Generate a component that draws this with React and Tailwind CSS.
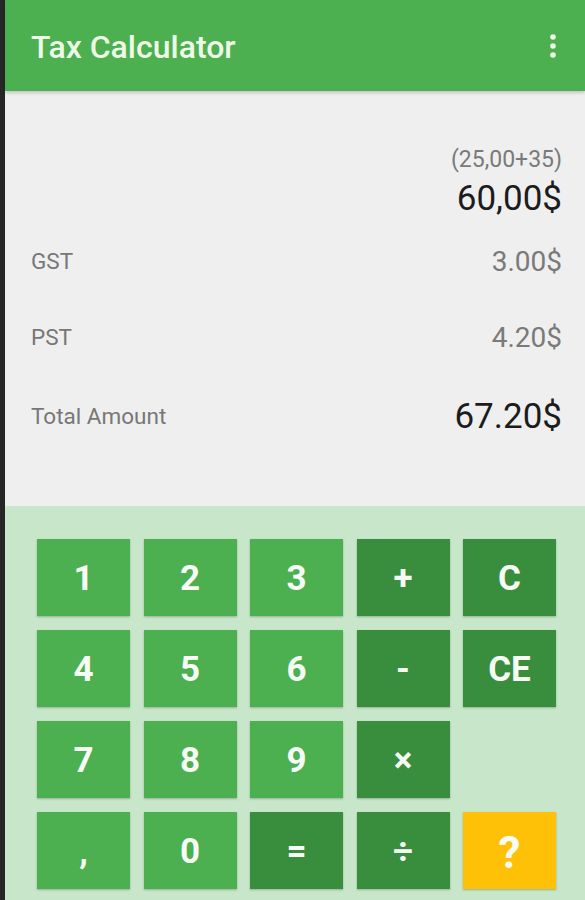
import React from "react";

const keys = [
  { t: "1", c: "l" }, { t: "2", c: "l" }, { t: "3", c: "l" }, { t: "+", c: "d" }, { t: "C", c: "d" },
  { t: "4", c: "l" }, { t: "5", c: "l" }, { t: "6", c: "l" }, { t: "-", c: "d" }, { t: "CE", c: "d" },
  { t: "7", c: "l" }, { t: "8", c: "l" }, { t: "9", c: "l" }, { t: "×", c: "d" }, { t: "", c: "n" },
  { t: ",", c: "l" }, { t: "0", c: "l" }, { t: "=", c: "d" }, { t: "÷", c: "d" }, { t: "?", c: "y" },
];

function Key({ k }) {
  if (k.c === "n") return <div />;
  const bg =
    k.c === "l" ? "bg-[#4caf50]" : k.c === "d" ? "bg-[#388e3c]" : "bg-[#ffc107]";
  const size = k.c === "y" ? "text-[44px]" : "text-[35px]";
  return (
    <div
      className={`${bg} flex items-center justify-center pt-[4px] text-[#f7fbf5] font-bold ${size} shadow-[0_1px_2px_rgba(0,0,0,0.25)]`}
    >
      {k.t}
    </div>
  );
}

export default function App() {
  return (
    <div
      className="flex w-[585px] h-[900px] overflow-hidden"
      style={{ fontFamily: "Roboto, 'Noto Sans', sans-serif" }}
    >
      <div className="w-[5px] bg-[#262626] shrink-0" />
      <div className="flex flex-col flex-1">
        <div className="h-[91px] bg-[#4caf50] flex items-center justify-between pl-[26px] pr-[28px] shadow-[0_2px_3px_rgba(0,0,0,0.18)] relative z-10">
          <div className="text-[32px] font-medium text-[#eef8e6] leading-none pt-[2px]">Tax Calculator</div>
          <svg width="8" height="26" viewBox="0 0 8 26">
            <circle cx="4" cy="4" r="2.8" fill="#eef8e6" />
            <circle cx="4" cy="13" r="2.8" fill="#eef8e6" />
            <circle cx="4" cy="22" r="2.8" fill="#eef8e6" />
          </svg>
        </div>
        <div className="h-[415px] bg-[#efefef] flex flex-col pt-[55px] pl-[26px] pr-[23px]">
          <div className="h-[28px] leading-[28px] text-right text-[23px] text-[#7a7a7a]">(25,00+35)</div>
          <div className="mt-[5px] h-[40px] leading-[40px] text-right text-[35px] text-[#1c1c1c]">60,00$</div>
          <div className="mt-[23px] h-[40px] flex items-center justify-between">
            <span className="text-[22.5px] text-[#777777]">GST</span>
            <span className="text-[28px] text-[#7a7a7a]">3.00$</span>
          </div>
          <div className="mt-[36px] h-[40px] flex items-center justify-between">
            <span className="text-[22.5px] text-[#777777]">PST</span>
            <span className="text-[28px] text-[#7a7a7a]">4.20$</span>
          </div>
          <div className="mt-[39px] h-[40px] flex items-center justify-between">
            <span className="text-[22.5px] text-[#777777]">Total Amount</span>
            <span className="text-[35px] text-[#1c1c1c]">67.20$</span>
          </div>
        </div>
        <div className="flex-1 bg-[#c8e6c9] pt-[33px] pl-[32px] pr-[29px]">
          <div className="grid grid-cols-5 gap-x-[13.5px] gap-y-[14px] auto-rows-[77px]">
            {keys.map((k, i) => (
              <Key key={i} k={k} />
            ))}
          </div>
        </div>
      </div>
    </div>
  );
}
